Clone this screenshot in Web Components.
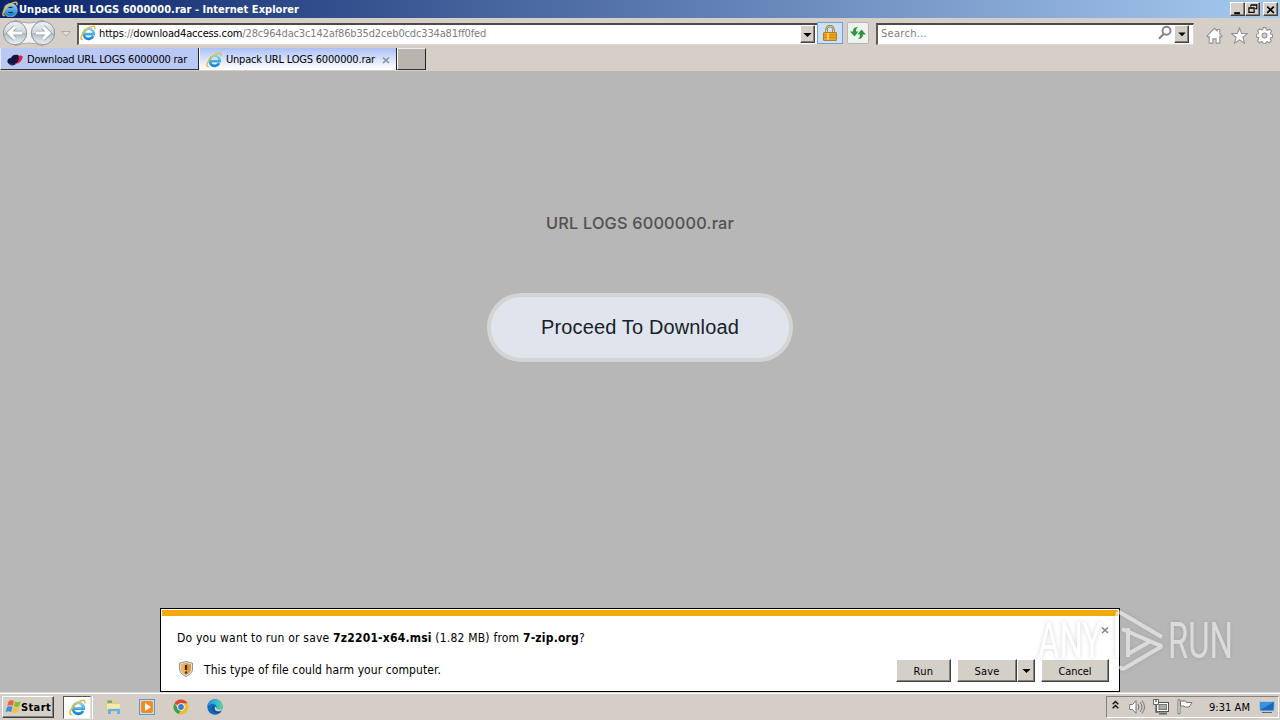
<!DOCTYPE html>
<html lang="en">
<head>
<meta charset="utf-8">
<title>Unpack URL LOGS 6000000.rar - Internet Explorer</title>
<style>
    html, body { margin: 0; width: 1280px; height: 720px; overflow: hidden; background: #b7b7b7; }
</style>
</head>
<body>
<desktop-screen></desktop-screen>
<script>
const ICONS = {
    ie: `<defs><linearGradient id="e" x2="0" y2="1"><stop stop-color="#7fd4fa"/><stop offset="1" stop-color="#1487d4"/></linearGradient></defs>
        <path d="M13.6 10.8A5.3 5.3 0 1 1 13.8 8.8H4.6" fill="none" stroke="#fff" stroke-width="3.8" opacity=".5"/>
        <path d="M13.2 11.2A5.100 5.100 0 1 1 13.8 9.100H4.6" fill="none" stroke="url(#e)" stroke-width="2.700"/>
        <path d="M2.800 14.500C.5 15 .3 12.600 2.200 9.400 4.800 5 10 1.300 13.400 1.300c1.700 0 1.900 1.300 1.200 3" fill="none" stroke="#e8bf38" stroke-width="1.500"/>`,
    bird: `<path d="M1 11c-1.500-2 0-5 3-5 1-3 4-4 7-3 2 1 2 5 0 7-3 3-7 3-10 1z" fill="#141445"/><path d="M11.500 4c3.500-1 4.500 0 4 1.500C15 9 12 12 8.500 12c2-1.500 4-4 3-8z" fill="#dc2347"/><path d="M1 11c2 3 6 3 8 1" fill="#25255d"/>`,
    lock: `<path d="M4.500 8V4.500a3.500 3.500 0 0 1 7 0V8" fill="none" stroke="#8e7635" stroke-width="2.400"/><path d="M4.500 8V4.500a3.500 3.500 0 0 1 7 0V8" fill="none" stroke="#e3d08b" stroke-width="1"/><rect x="1.500" y="7.500" width="13" height="8" rx=".5" fill="#edaa20" stroke="#b77e19"/><path d="M2 10h12M2 12.500h12" stroke="#c78818"/><path d="M6 8v7" stroke="#f6cc61" stroke-width="2"/>`,
    refresh: `<path d="M0 8l4.500 5L8.500 8H6c0-2 .3-3 2-4.500C5 3.300 3 5 3 8z" transform="translate(0 -1.500)" fill="#31943c"/><path d="M16 8l-4.500-5L7.500 8H10c0 2-.3 3-2 4.500 3 .2 5-1.500 5-4.500z" transform="translate(0 1.500)" fill="#31943c"/>`,
    search: `<circle cx="9.500" cy="5.800" r="4" fill="none" stroke="#85858a" stroke-width="1.900"/><path d="M6.600 9L2 13.800" stroke="#85858a" stroke-width="2.300"/>`,
    home: `<path d="M.8 8.500L8 1.200l2.500 2.500V2.300H13v4l2.200 2.200-1.300 1.200-.9-.8v6.300H9.500v-4h-3v4H3V8.900l-.9.8z" fill="#fff" stroke="#919191"/>`,
    star: `<path d="M8 .8l2 5.200 5.500.2-4.300 3.500 1.500 5.500L8 12.100l-4.700 3.100 1.500-5.500L.5 6.200 6 6z" fill="#fff" stroke="#919191"/>`,
    gear: `<path d="M6.600.6h2.800l.4 2 1.200.5 1.700-1.200 2 2L13.500 5.600l.5 1.200 1.600.3v2.500l-1.800.4-.5 1.200 1.100 1.700-2 2-1.700-1.100-1.200.5-.4 1.500H6.700l-.4-1.600-1.200-.5-1.800 1.100-1.900-1.900 1.100-1.800L2 9.900.4 9.500V6.900L2 6.500l.5-1.200-1-1.700 1.900-1.900L5.100 2.800l1.200-.4z" fill="#fff" stroke="#919191"/><circle cx="8" cy="8" r="2.300" fill="#d4cfc9" stroke="#919191"/>`,
    windows: `<path d="M3.500 2.500C5 1 7 1 9 2L7.700 7C6 6 4 6 2.200 7z" fill="#ed6338"/><path d="M10 2.500c2 1 3.800 1 5.700-.4L14.400 7c-1.800 1.300-3.700 1.300-5.700.3z" fill="#86bb37"/><path d="M2 8c1.800-1 3.700-1 5.500 0l-1.300 5c-2-1-3.700-1-5.700.2z" fill="#3c8ddc"/><path d="M8.500 8.300c2 1 3.700 1 5.700-.2l-1.400 5c-2 1.400-3.800 1.200-5.600.2z" fill="#f4c22c"/>`,
    folder: `<path d="M1 2h6l1 1.500h6V13H1z" fill="#e6ce74"/><path d="M2.500 1.500H7V4H2.500z" fill="#6ba987"/><path d="M2 5h13v6H2z" fill="#fae9a6"/><path d="M3 15V9.500h12V15h-3v-3H6v3z" fill="#68b3dc"/><path d="M3 9.500h12" stroke="#b7e5fa"/>`,
    media: `<rect x=".5" y=".5" width="15" height="15" fill="#c5def3" stroke="#6195cd"/><rect x="2" y="2" width="12" height="12" rx="2" fill="#f28b20"/><path d="M6 4v8l6-4z" fill="#fff"/>`,
    chrome: `<circle cx="8" cy="8" r="7.500" fill="#efbd2d"/><path d="M8 8L1.500 4.250A7.500 7.500 0 0 1 14.500 4.250H8z" fill="#dc4637"/><path d="M1.500 4.250L5 10l3 1.500-2.500 3.600A7.500 7.500 0 0 1 1.500 4.250z" fill="#35a156"/><circle cx="8" cy="8" r="3.700" fill="#fff"/><circle cx="8" cy="8" r="2.900" fill="#397bdf"/>`,
    edge: `<defs><linearGradient id="g"><stop stop-color="#268cd8"/><stop offset=".7" stop-color="#37c3cf"/><stop offset="1" stop-color="#72d66d"/></linearGradient></defs><circle cx="8" cy="8" r="7.700" fill="#1268b9"/><path d="M.3 8C.5 3.500 3.500.4 8 .4c5 0 7.700 3.500 7.700 7 0 2.500-2.500 3.800-5 3.400-1.500-.3-2-.9-1.500-1.800C10.500 6 7 4.600 4.500 5.100 2.500 5.500 1 6.600.3 8z" fill="url(#g)"/><path d="M6.300 7.500c-1.500 4.300 2.700 7 7.300 4.900" fill="none" stroke="#174b92" stroke-width="1.500"/><path d="M9 9c.2-.7.200-1.200 0-1.700-2 1.200-1.500 4.800 2 5 2 0 3.200-.7 4-1.400l2-1v-2c-1 2.400-4.800 4-8 1.100z" fill="#d4d0c8"/>`,
    shield: `<path d="M8 .5l6.500 1.700V8c0 3.500-3 6-6.500 7.500C4.500 14 1.500 11.500 1.500 8V2.200z" fill="#e6e2dc" stroke="#939393"/><path d="M8 2l5 1.200V8c0 2.600-2 4.500-5 6-3-1.500-5-3.400-5-6V3.200z" fill="#d99a42"/><path d="M8 2v12c-3-1.500-5-3.400-5-6V3.200z" fill="#efb759"/><path d="M8 4v5M8 10.500v2" stroke="#462b15" stroke-width="2.300"/>`,
    chevrons: `<path d="M4.500 6.500L8 3l3.500 3.500M4.500 11.500L8 8l3.500 3.500" fill="none" stroke="#111" stroke-width="1.800"/>`,
    speaker: `<path d="M.7 5.500h2.800L7 1.700v12.600l-3.500-3.800H.7z" fill="#fff" stroke="#777"/><path d="M9 5q2 3 0 6M11 3q4 5 0 10M13 1.500q5 6.500 0 13" fill="none" stroke="#777"/>`,
    network: `<rect x="3.500" y="3.500" width="12" height="9" fill="#fff" stroke="#555"/><rect x="6" y="5.500" width="7.500" height="5" fill="#aaa" stroke="#777"/><path d="M6 14.500h8" stroke="#666" stroke-width="2"/><path d="M.5.500h5v5h-5z" fill="#fff" stroke="#666"/><path d="M3 0v3M3 5.500V13h3" fill="none" stroke="#666" stroke-width="1.400"/>`,
    flag: `<path d="M1 .8h2v14H1z" fill="#fff" stroke="#777"/><path d="M3.500 2h5l1 1.500H15L13.500 6l-1.400 2H8L7 7H3.500z" fill="#fff" stroke="#777"/>`,
    monitor: `<path d="M.5 2.500h15l-.5 9.500H1z" fill="#1769bd" stroke="#b5c6d3"/><path d="M1 3h14L1 11z" fill="#3b91dc"/><path d="M3 13.500h10" stroke="#567"/>`,
    x: `<path d="M2 3l12 11M14 3L2 14" stroke="currentColor" stroke-width="3"/>`,
    minimize: `<path d="M4 12.500h7" stroke="#000" stroke-width="2.500"/>`,
    restore: `<path d="M5 3h8M5 2.500h8v5h-2M5 3v2M2.500 6.500h7v6h-7zM2 7h8" fill="none" stroke="#000" stroke-width="1.500"/>`,
    down: `<path d="M3 6h10l-5 5z" fill="#000"/>`
};

class UiIcon extends HTMLElement {
    connectedCallback() {
        const size = this.getAttribute('size') || 16;
        this.attachShadow({ mode: 'open' }).innerHTML = `
            <style>
                :host { display: block; flex: none; width: ${size}px; height: ${size}px; }
                svg { display: block; width: 100%; height: 100%; }
            </style>
            <svg viewBox="0 0 16 16">${ICONS[this.getAttribute('name')]}</svg>`;
    }
}

// One line of text, spaced out to an exact pixel width
class FitText extends HTMLElement {
    connectedCallback() {
        this.attachShadow({ mode: 'open' }).innerHTML = `
            <style>
                :host { display: block; flex: none; white-space: nowrap; }
                span { display: inline-block; }
            </style>
            <span><slot></slot></span>`;
        const span = this.shadowRoot.querySelector('span');
        const wanted = Number(this.getAttribute('width'));
        const gap = (wanted - span.getBoundingClientRect().width) / this.textContent.length;
        span.style.letterSpacing = gap + 'px';
        this.style.width = wanted + 'px';
    }
}

class ClassicButton extends HTMLElement {
    connectedCallback() {
        this.attachShadow({ mode: 'open' }).innerHTML = `
            <style>
                :host {
                    display: flex;
                    align-items: center;
                    justify-content: center;
                    flex: none;
                    box-sizing: border-box;
                    background: #d4d0c8;
                    border: 1px solid;
                    border-color: #fff #404040 #404040 #fff;
                    box-shadow: inset -1px -1px #858078;
                    color: #000;
                }
            </style>
            <slot></slot>`;
    }
}

class TitleBar extends HTMLElement {
    connectedCallback() {
        this.attachShadow({ mode: 'open' }).innerHTML = `
            <style>
                :host {
                    display: flex;
                    height: 18px;
                    box-sizing: border-box;
                    padding: 1px 2px 0 2px;
                    background: linear-gradient(90deg, #0a246a, #a6caf0);
                    color: #fff;
                    font-weight: bold;
                    line-height: 17px;
                }
                .space { flex: 1; }
                classic-button { width: 15px; height: 14px; margin-top: 1px; }
                .close { margin-left: 3px; }
            </style>
            <ui-icon name="ie"></ui-icon>
            <fit-text style="margin-left:1px" width="280">Unpack URL LOGS 6000000.rar - Internet Explorer</fit-text>
            <div class="space"></div>
            <classic-button><ui-icon name="minimize" size="13"></ui-icon></classic-button>
            <classic-button><ui-icon name="restore" size="12"></ui-icon></classic-button>
            <classic-button class="close"><ui-icon name="x" size="9"></ui-icon></classic-button>`;
    }
}

class NavBar extends HTMLElement {
    connectedCallback() {
        this.attachShadow({ mode: 'open' }).innerHTML = `
            <style>
                :host {
                    display: flex;
                    height: 30px;
                    background: #d5cfc8;
                }
                .history { width: 77px; height: 30px; flex: none; }
                .field {
                    display: flex;
                    flex: none;
                    box-sizing: border-box;
                    height: 22px;
                    margin-top: 5px;
                    background: #fff;
                    border: 1px solid #ded9d2;
                    border-top: 2px solid #504a46;
                    border-left: 2px solid #615b54;
                    line-height: 18px;
                    color: #7d7d7d;
                }
                .address { width: 740px; padding-left: 1px; border-right: 0; }
                .address fit-text { margin-left: 3px; }
                .address b { font-weight: normal; color: #000; }
                .space { flex: 1; }
                classic-button { width: 15px; height: 18px; margin: 0 1px; }
                .address classic-button { margin-right: 2px; }
                .tool {
                    display: flex;
                    align-items: center;
                    justify-content: center;
                    flex: none;
                    box-sizing: border-box;
                    height: 22px;
                    margin-top: 4px;
                    border: 1px solid #b9b6b1;
                    background: #eff3ee;
                }
                .lock { width: 26px; background: #cce0fa; border-color: #74a0d5; }
                .refresh { width: 22px; margin-left: 4px; border-radius: 2px; }
                .search { width: 318px; margin-left: 7px; padding-left: 2px; }
                .search classic-button { margin-right: 4px; }
                .links { display: flex; gap: 8px; margin: 9px 0 0 12px; }
            </style>
            <svg class="history" viewBox="0 0 77 30">
                <defs><linearGradient id="b" x2="0" y2="1"><stop stop-color="#eef2f5"/><stop offset=".5" stop-color="#ccd5da"/><stop offset=".52" stop-color="#aebbc2"/><stop offset="1" stop-color="#f0f5f6"/></linearGradient></defs>
                <path d="M15 2Q29 8 43 2v26Q29 22 15 28z" fill="#f4f3f1" stroke="#aaa"/>
                <g fill="url(#b)" stroke="#8c979d"><circle cx="15" cy="15" r="11.700"/><circle cx="43" cy="15" r="11.700"/></g>
                <g fill="none" stroke="#98a5ae" stroke-width="4.600"><path d="M22 15H9m6-6l-6 6 6 6M36 15h13m-6-6l6 6-6 6"/></g>
                <g fill="none" stroke="#fff" stroke-width="3"><path d="M22 15H9m6-6l-6 6 6 6M36 15h13m-6-6l6 6-6 6"/></g>
                <path d="M61.500 13.500h9L66 18z" fill="#e3dfdb" stroke="#b2aca6"/>
            </svg>
            <div class="field address">
                <ui-icon name="ie"></ui-icon>
                <fit-text width="387"><b>https</b>://<b>download4access.com</b>/28c964dac3c142af86b35d2ceb0cdc334a81ff0fed</fit-text>
                <div class="space"></div>
                <classic-button><ui-icon name="down" size="13"></ui-icon></classic-button>
            </div>
            <div class="tool lock"><ui-icon name="lock"></ui-icon></div>
            <div class="tool refresh"><ui-icon name="refresh"></ui-icon></div>
            <div class="field search">
                <fit-text style="margin-left:1px" width="46">Search...</fit-text>
                <div class="space"></div>
                <ui-icon name="search"></ui-icon>
                <classic-button><ui-icon name="down" size="12"></ui-icon></classic-button>
            </div>
            <div class="links">
                <ui-icon name="home" size="17"></ui-icon>
                <ui-icon name="star" size="17"></ui-icon>
                <ui-icon name="gear" size="17"></ui-icon>
            </div>`;
    }
}

class TabStrip extends HTMLElement {
    connectedCallback() {
        this.attachShadow({ mode: 'open' }).innerHTML = `
            <style>
                :host {
                    display: flex;
                    height: 23px;
                    background: #d5cfc8;
                    line-height: 24px;
                }
                .tab {
                    display: flex;
                    box-sizing: border-box;
                    height: 22px;
                    border-right: 1px solid #222;
                    border-bottom: 1px solid #333;
                }
                .first { width: 199px; padding-left: 6px; background: #b9c9f4; border-left: 1px solid #e6ebfc; }
                .active {
                    width: 198px;
                    padding-left: 6px;
                    background: linear-gradient(#abc0f5, #edf2fc 75%, #fff);
                    border-bottom: 0;
                    border-left: 1px solid #fff;
                }
                .new { width: 29px; background: #bab4ae; border-top: 1px solid #eee; border-left: 1px solid #fff; }
                ui-icon { margin-top: 4px; }
            </style>
            <div class="tab first">
                <ui-icon name="bird"></ui-icon>
                <fit-text style="margin-left:4px" width="160">Download URL LOGS 6000000 rar</fit-text>
            </div>
            <div class="tab active">
                <ui-icon name="ie"></ui-icon>
                <fit-text style="margin-left:4px" width="149">Unpack URL LOGS 6000000.rar</fit-text>
                <ui-icon name="x" size="8" style="margin:8px 0 0 7px;color:#888c99"></ui-icon>
            </div>
            <div class="tab new"></div>`;
    }
}

class DownloadPage extends HTMLElement {
    connectedCallback() {
        this.attachShadow({ mode: 'open' }).innerHTML = `
            <style>
                :host {
                    display: flex;
                    flex-direction: column;
                    align-items: center;
                    flex: 1;
                    background: #b7b7b7;
                }
                .name {
                    margin-top: 140px;
                    height: 24px;
                    line-height: 24px;
                    font-family: Inter, sans-serif;
                    font-size: 16.300px;
                    font-weight: 500;
                    color: #515151;
                }
                .proceed {
                    display: flex;
                    align-items: center;
                    justify-content: center;
                    box-sizing: border-box;
                    width: 306px;
                    height: 69px;
                    margin-top: 58px;
                    border: 4px solid #d3d4d5;
                    border-radius: 35px;
                    background: #e0e5ed;
                    font: 20px "Liberation Sans", sans-serif;
                    color: #182029;
                }
            </style>
            <fit-text class="name" width="188">URL LOGS 6000000.rar</fit-text>
            <div class="proceed"><fit-text width="198">Proceed To Download</fit-text></div>`;
    }
}

class DownloadBar extends HTMLElement {
    connectedCallback() {
        this.attachShadow({ mode: 'open' }).innerHTML = `
            <style>
                :host {
                    display: flex;
                    flex-direction: column;
                    box-sizing: border-box;
                    width: 960px;
                    height: 84px;
                    border: 1px solid #000;
                    background: #fff;
                    font-size: 12px;
                }
                .stripe { height: 6px; margin: 1px 1px 0; background: #f3aa0b; }
                .row { display: flex; align-items: center; }
                .row > fit-text { margin-top: 2px; }
                .question { height: 42px; padding: 0 10px 0 16px; }
                .warning { height: 22px; padding: 0 10px 0 17px; }
                .space { flex: 1; }
                .action { font-size: 11px; height: 23px; margin-top: 3px; }
                .action fit-text { margin-top: 1px; }
            </style>
            <div class="stripe"></div>
            <div class="row question">
                <fit-text width="408">Do you want to run or save <b>7z2201-x64.msi</b> (1.82 MB) from <b>7-zip.org</b>?</fit-text>
                <div class="space"></div>
                <ui-icon name="x" size="8" style="color:#858585;margin-bottom:15px"></ui-icon>
            </div>
            <div class="row warning">
                <ui-icon name="shield"></ui-icon>
                <fit-text style="margin-left:10px" width="237">This type of file could harm your computer.</fit-text>
                <div class="space"></div>
                <classic-button class="action" style="width:55px"><fit-text width="20">Run</fit-text></classic-button>
                <classic-button class="action" style="width:60px;margin-left:6px"><fit-text width="25">Save</fit-text></classic-button>
                <classic-button class="action" style="width:18px"><ui-icon name="down" size="13"></ui-icon></classic-button>
                <classic-button class="action" style="width:68px;margin-left:6px"><fit-text width="33">Cancel</fit-text></classic-button>
            </div>`;
    }
}

class RunWatermark extends HTMLElement {
    connectedCallback() {
        this.attachShadow({ mode: 'open' }).innerHTML = `
            <style>
                :host { display: block; width: 200px; height: 64px; pointer-events: none; }
                svg { display: block; overflow: visible; filter: drop-shadow(0 0 2px rgba(120, 120, 120, .6)); }
                text { font: 50px Roboto, "Liberation Sans", sans-serif; }
            </style>
            <svg width="200" height="64" fill="#fff" opacity=".5">
                <text x="2" y="49" textLength="64" lengthAdjust="spacingAndGlyphs">ANY</text>
                <text x="132" y="49" textLength="65" lengthAdjust="spacingAndGlyphs">RUN</text>
                <path d="M81 48V6q0-4 4-2l41 24M86 20l37 16q4 1 0 3L89 59q-4 2-5-2M92 48V19M92 45l21-12" fill="none" stroke="#fff" stroke-width="4"/>
            </svg>`;
    }
}

class TaskBar extends HTMLElement {
    connectedCallback() {
        this.attachShadow({ mode: 'open' }).innerHTML = `
            <style>
                :host {
                    display: flex;
                    box-sizing: border-box;
                    height: 28px;
                    padding-top: 2px;
                    border-top: 1px solid #d9d9d5;
                    box-shadow: inset 0 1px #fff;
                    background: #d5cec7;
                }
                .start { width: 52px; height: 22px; margin: 1px 0 0 2px; font-weight: bold; }
                .pressed {
                    box-sizing: border-box;
                    width: 28px;
                    height: 23px;
                    margin: 1px 0 0 9px;
                    padding: 2px 0 0 5px;
                    background: #fff;
                    border: 1px solid #555;
                    border-right-color: #ddd;
                    border-bottom-color: #eee;
                }
                .edge { width: 1px; height: 23px; margin: 1px 0 0 1px; background: #fff; }
                .pins { display: flex; gap: 18px; margin: 4px 0 0 12px; }
                .space { flex: 1; }
                .tray {
                    display: flex;
                    box-sizing: border-box;
                    width: 173px;
                    height: 22px;
                    margin: 1px 1px 0 0;
                    padding: 2px 2px 0 2px;
                    border: 1px solid #85817c;
                    border-right-color: #fff;
                    border-bottom-color: #fff;
                    line-height: 17px;
                }
                .tray ui-icon:not(:first-child) { margin-left: 8px; }
            </style>
            <classic-button class="start"><ui-icon name="windows" size="16"></ui-icon><fit-text width="30">Start</fit-text></classic-button>
            <div class="pressed"><ui-icon name="ie" size="17"></ui-icon></div>
            <div class="edge"></div>
            <div class="pins">
                <ui-icon name="folder"></ui-icon>
                <ui-icon name="media"></ui-icon>
                <ui-icon name="chrome"></ui-icon>
                <ui-icon name="edge"></ui-icon>
            </div>
            <div class="space"></div>
            <div class="tray">
                <ui-icon name="chevrons" size="13"></ui-icon>
                <ui-icon name="speaker" style="margin-left:7px"></ui-icon>
                <ui-icon name="network"></ui-icon>
                <ui-icon name="flag"></ui-icon>
                <fit-text style="margin-left:16px" width="41">9:31 AM</fit-text>
                <ui-icon name="monitor" style="margin-left:9px"></ui-icon>
            </div>`;
    }
}

class DesktopScreen extends HTMLElement {
    connectedCallback() {
        this.attachShadow({ mode: 'open' }).innerHTML = `
            <style>
                :host {
                    display: flex;
                    flex-direction: column;
                    position: relative;
                    width: 1280px;
                    height: 720px;
                    font: 11px "DejaVu Sans Condensed", "DejaVu Sans", sans-serif;
                    font-stretch: condensed;
                    color: #000;
                }
                download-bar { position: absolute; left: 160px; top: 608px; }
                run-watermark { position: absolute; left: 1036px; top: 609px; }
            </style>
            <title-bar></title-bar>
            <nav-bar></nav-bar>
            <tab-strip></tab-strip>
            <download-page></download-page>
            <task-bar></task-bar>
            <download-bar></download-bar>
            <run-watermark></run-watermark>`;
    }
}

customElements.define('ui-icon', UiIcon);
customElements.define('fit-text', FitText);
customElements.define('classic-button', ClassicButton);
customElements.define('title-bar', TitleBar);
customElements.define('nav-bar', NavBar);
customElements.define('tab-strip', TabStrip);
customElements.define('download-page', DownloadPage);
customElements.define('download-bar', DownloadBar);
customElements.define('run-watermark', RunWatermark);
customElements.define('task-bar', TaskBar);
customElements.define('desktop-screen', DesktopScreen);
</script>
</body>
</html>
